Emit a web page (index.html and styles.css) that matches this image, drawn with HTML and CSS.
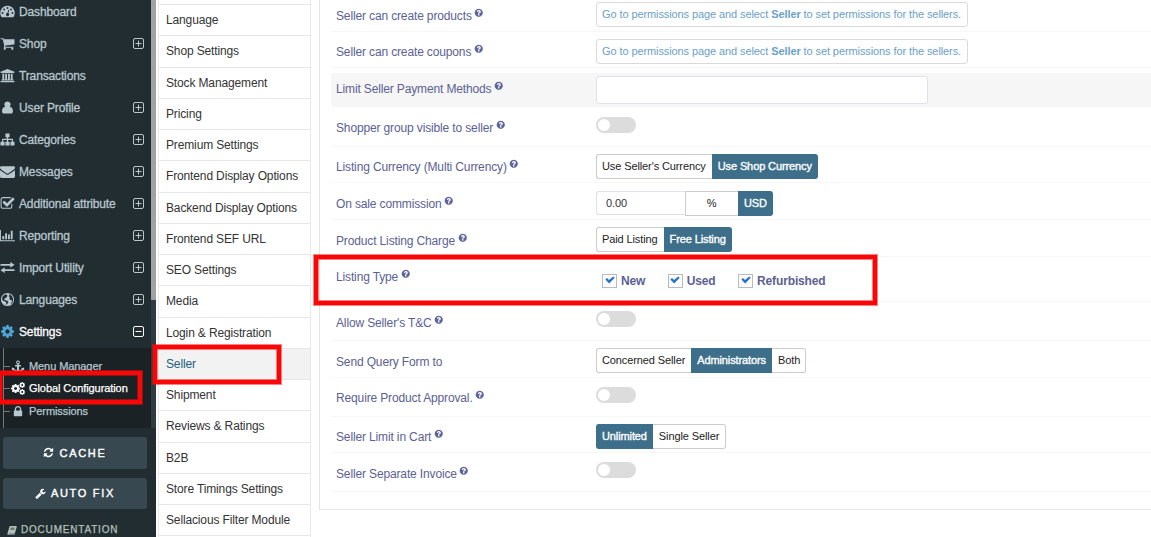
FILE: index.html
```html
<!DOCTYPE html>
<html lang="en">
<head>
<meta charset="utf-8">
<title>Global Configuration</title>
<link rel="stylesheet" href="styles.css">
</head>
<body>
<svg class="sprite" aria-hidden="true">
  <symbol id="dashboard" viewBox="0 0 16 14"><path fill-rule="evenodd" d="M8 1a7.7 7.7 0 0 0-6.6 11.7q.3.5.8.5h11.6q.5 0 .8-.5A7.700 7.700 0 0 0 8 1zM8 2.200a1 1 0 1 1 0 2 1 1 0 0 1 0-2zM4.300 3.800a1 1 0 1 1 0 2 1 1 0 0 1 0-2zM11.700 3.800a1 1 0 1 1 0 2 1 1 0 0 1 0-2zM2.700 7.600a1 1 0 1 1 0 2 1 1 0 0 1 0-2zM13.300 7.600a1 1 0 1 1 0 2 1 1 0 0 1 0-2zM8.900 5.100l.9.250-.9 3.500a1.600 1.600 0 1 1-.9-.2z"/></symbol>
  <symbol id="cart" viewBox="0 0 1792 1792"><path d="M704 1536q0 52-38 90t-90 38-90-38-38-90 38-90 90-38 90 38 38 90zm896 0q0 52-38 90t-90 38-90-38-38-90 38-90 90-38 90 38 38 90zm128-1088v512q0 24-16.500 42.500t-40.500 21.500l-1044 122q13 60 13 70 0 16-24 64h920q26 0 45 19t19 45-19 45-45 19h-1024q-26 0-45-19t-19-45q0-11 8-31.500t16-36 21.500-40 15.500-29.500l-177-823h-204q-26 0-45-19t-19-45 19-45 45-19h256q16 0 28.500 6.500t19.500 15.500 13 24.500 8 26 5.500 29.500 4.500 26h1201q26 0 45 19t19 45z"/></symbol>
  <symbol id="bank" viewBox="0 0 16 16"><path d="M8 1l7.500 3v1h-1v.6h-13V5h-1V4zM2.500 6.300h2v6h1v-6h2v6h1v-6h2v6h1v-6h2v6h.9v.8H1.600v-.8h.9zM1 13.600h14v.7h.7v1H.3v-1H1z"/></symbol>
  <symbol id="user" viewBox="0 0 16 16"><path d="M8 1.500a3.400 3.400 0 0 1 2.400 5.800c2.500.2 3.400 2.400 3.400 4.700 0 1.600-.9 2.500-2.300 2.500h-7C3.100 14.500 2.200 13.600 2.200 12c0-2.300.9-4.500 3.400-4.700A3.400 3.400 0 0 1 8 1.500z"/></symbol>
  <symbol id="sitemap" viewBox="0 0 16 16"><path d="M5.800 1.500h4.400v4H8.700v1.700h5.100v3.300h1.700v4h-4.400v-4h1.500V8.400H8.700v2.100h1.500v4H5.800v-4h1.500V8.400H3.400v2.100h1.500v4H.5v-4h1.700V7.200h5.100V5.500H5.800z"/></symbol>
  <symbol id="mail" viewBox="0 0 1792 1792"><path d="M1792 710v794q0 66-47 113t-113 47h-1472q-66 0-113-47t-47-113v-794q44 49 101 87 362 246 497 345 57 42 92.500 65.500t94.500 48 110 24.500h2q51 0 110-24.500t94.500-48 92.500-65.500q170-123 498-345 57-39 100-87zm0-294q0 79-49 151t-122 123q-376 261-468 325-10 7-42.500 31t-54 38.500-52 32.500-57.500 27-50 9h-2q-23 0-50-9t-57.500-27-52-32.500-54-38.500-42.500-31q-91-64-262-182.500t-205-142.500q-62-42-117-115.500t-55-136.500q0-78 41.500-130t118.500-52h1472q65 0 112.500 47t47.500 113z"/></symbol>
  <symbol id="check" viewBox="0 0 1792 1792"><path d="M1472 930v318q0 119-84.500 203.500t-203.500 84.500h-832q-119 0-203.500-84.500t-84.500-203.500v-832q0-119 84.500-203.500t203.500-84.500h832q63 0 117 25 15 7 18 23 3 17-9 29l-49 49q-10 10-23 10-3 0-9-2-23-6-45-6h-832q-66 0-113 47t-47 113v832q0 66 47 113t113 47h832q66 0 113-47t47-113v-254q0-13 9-22l64-64q10-10 23-10 6 0 12 3 20 8 20 29zm231-489l-814 814q-24 24-57 24t-57-24l-430-430q-24-24-24-57t24-57l110-110q24-24 57-24t57 24l263 263 647-647q24-24 57-24t57 24l110 110q24 24 24 57t-24 57z"/></symbol>
  <symbol id="chart" viewBox="0 0 16 16"><path d="M0 2h1v11h15v1H0zM2.500 8.500h2V12h-2zM5.500 5.500h2V12h-2zM8.500 7h2v5h-2zM11.500 3h2v9h-2z"/></symbol>
  <symbol id="exchange" viewBox="0 0 16 16"><path d="M.5 4.200H11V2l4.500 3.100L11 8.200V6H.5zM15.500 9.900H5V7.700L.5 10.800 5 13.900v-2.200h10.500z"/></symbol>
  <symbol id="globe" viewBox="0 0 16 16"><path fill-rule="evenodd" d="M8 1a7 7 0 1 1 0 14A7 7 0 0 1 8 1zM9 2.200l1.300 1-1.100 1.500 1.500.5-.8 1.700.8 1.400 2 .6.1 1.600-1.700 2.900c2-1.200 2.900-3 2.800-5.400C13.800 4.800 11.800 2.500 9 2.200zM2.500 5.500L2.200 8l1.600 1.600 1.600.5 1.600 1.200-1.100 2.200.7.200 2-2.100.2-1.400-2.300-1.300-1.400-.2-.6-1.200 1.200-1.100 1.500-.7.7-1.700-1.200-1.500c-1.700.4-3.200 1.400-4.200 3z"/></symbol>
  <symbol id="cog" viewBox="0 0 1792 1792"><path d="M1152 896q0-106-75-181t-181-75-181 75-75 181 75 181 181 75 181-75 75-181zm512-109v222q0 12-8 23t-20 13l-185 28q-19 54-39 91 35 50 107 138 10 12 10 25t-9 23q-27 37-99 108t-94 71q-12 0-26-9l-138-108q-44 23-91 38-16 136-29 186-7 28-36 28h-222q-14 0-24.500-8.500t-11.500-21.500l-28-184q-49-16-90-37l-141 107q-10 9-25 9-14 0-25-11-126-114-165-168-7-10-7-23 0-12 8-23 15-21 51-66.500t54-70.500q-27-50-41-99l-183-27q-13-2-21-12.500t-8-23.500v-222q0-12 8-23t19-13l186-28q14-46 39-92-40-57-107-138-10-12-10-24 0-10 9-23 26-36 98.500-107.500t94.500-71.500q13 0 26 10l138 107q44-23 91-38 16-136 29-186 7-28 36-28h222q14 0 24.500 8.500t11.500 21.500l28 184q49 16 90 37l142-107q9-9 24-9 13 0 25 10 129 119 165 170 7 8 7 22 0 12-8 23-15 21-51 66.500t-54 70.500q26 50 41 98l183 28q13 2 21 12.500t8 23.500z"/></symbol>
  <symbol id="cogs" viewBox="0 0 14 13"><use href="#cog" x="-.7" y="1.200" width="10.600" height="10.600"/><use href="#cog" x="7.800" y="-.4" width="6.800" height="6.800"/><use href="#cog" x="7.800" y="6.600" width="6.800" height="6.800"/></symbol>
  <symbol id="anchor" viewBox="0 0 14 14"><path fill-rule="evenodd" d="M7 .5a2 2 0 0 1 .9 3.800v1.200h2.300v1.600H8.100V11c1.600-.1 2.600-.6 3.200-1.300l-.9-.9L13.600 8v3.300l-1-.8C11.500 12 9.700 13.200 7 13.400 4.300 13.200 2.500 12 1.400 10.500l-1 .8V8l3.200.8-.9.900c.6.700 1.600 1.200 3.200 1.300V7.100H3.800V5.500h2.300V4.300A2 2 0 0 1 7 .5zM7 1.600a.9.900 0 1 0 0 1.800.9.900 0 0 0 0-1.800z"/></symbol>
  <symbol id="lock" viewBox="0 0 1792 1792"><path d="M640 768h512v-192q0-106-75-181t-181-75-181 75-75 181v192zm832 96v576q0 40-28 68t-68 28h-960q-40 0-68-28t-28-68v-576q0-40 28-68t68-28h32v-192q0-184 132-316t316-132 316 132 132 316v192h32q40 0 68 28t28 68z"/></symbol>
  <symbol id="refresh" viewBox="0 0 1792 1792"><path d="M1639 1056q0 5-1 7-64 268-268 434.500t-478 166.500q-146 0-282.500-55t-243.500-157l-129 129q-19 19-45 19t-45-19-19-45v-448q0-26 19-45t45-19h448q26 0 45 19t19 45-19 45l-137 137q71 66 161 102t187 36q134 0 250-65t186-179q11-17 53-117 8-23 30-23h192q13 0 22.500 9.500t9.500 22.500zm25-800v448q0 26-19 45t-45 19h-448q-26 0-45-19t-19-45 19-45l138-138q-148-137-349-137-134 0-250 65t-186 179q-11 17-53 117-8 23-30 23h-199q-13 0-22.500-9.500t-9.500-22.500v-7q65-268 270-434.500t480-166.500q146 0 284 55.500t245 156.500l130-129q19-19 45-19t45 19 19 45z"/></symbol>
  <symbol id="wrench" viewBox="0 0 1792 1792"><path d="M448 1472q0-26-19-45t-45-19-45 19-19 45 19 45 45 19 45-19 19-45zm644-420l-682 682q-37 37-90 37-52 0-91-37l-106-108q-38-36-38-90 0-53 38-91l681-681q39 98 114.500 173.500t173.500 114.500zm634-435q0 39-23 106-47 134-164.500 217.500t-258.500 83.500q-185 0-316.500-131.500t-131.500-316.500 131.500-316.500 316.500-131.500q58 0 121.500 16.500t107.500 46.500q16 11 16 28t-16 28l-293 169v224l193 107q5-3 79-48.500t135.500-81 70.500-35.500q15 0 23.500 10t8.500 25z"/></symbol>
  <symbol id="book" viewBox="0 0 14 14"><path fill-rule="evenodd" d="M4.600 1.500h8.200q1 .2.800 1.200l-2.400 8.600q-.3.900-1.200.9H2.500q-.7 0-.7.500t.8.500h7.800l.5-.4v.7q-.3.500-1 .5H2Q.4 13.500.6 11.800L3.200 3q.4-1.400 1.400-1.500zM5.200 4l-.3.900h5.700l.3-.9zM4.600 6.200l-.3.900H10l.3-.9z"/></symbol>
  <symbol id="help" viewBox="0 0 1792 1792"><path d="M1024 1376v-192q0-14-9-23t-23-9h-192q-14 0-23 9t-9 23v192q0 14 9 23t23 9h192q14 0 23-9t9-23zm256-672q0-88-55.500-163t-138.500-116-170-41q-243 0-371 213-15 24 8 42l132 100q7 6 19 6 16 0 25-12 53-68 86-92 34-24 86-24 48 0 85.500 26t37.500 59q0 38-20 61t-68 45q-63 28-115.500 86.500t-52.500 125.500v36q0 14 9 23t23 9h192q14 0 23-9t9-23q0-19 21.500-49.500t54.500-49.500q32-18 49-28.500t46-35 44.500-48 28-60.500 12.500-81zm384 192q0 209-103 385.500t-279.500 279.500-385.500 103-385.500-103-279.500-279.500-103-385.500 103-385.500 279.500-279.500 385.500-103 385.500 103 279.500 279.500 103 385.500z"/></symbol>
  <symbol id="plus" viewBox="0 0 11 11"><path fill="none" stroke="currentColor" d="M2 .5h7A1.500 1.500 0 0 1 10.500 2v7A1.500 1.500 0 0 1 9 10.500H2A1.500 1.500 0 0 1 .5 9V2A1.500 1.500 0 0 1 2 .5zM2.500 5.500h6M5.500 2.500v6"/></symbol>
  <symbol id="minus" viewBox="0 0 11 11"><path fill="none" stroke="currentColor" d="M2 .5h7A1.500 1.500 0 0 1 10.500 2v7A1.500 1.500 0 0 1 9 10.500H2A1.500 1.500 0 0 1 .5 9V2A1.500 1.500 0 0 1 2 .5zM2.500 5.500h6"/></symbol>
  <symbol id="tick" viewBox="0 0 10 8"><path d="M.3 3.600L2 2l2 1.900L8.200.4l1.500 1.400L4.200 7.600z"/></symbol>
</svg>

<div class="app">
  <aside class="sidebar">
    <div class="side-main">
      <nav class="menu">
        <a class="item"><svg class="icon"><use href="#dashboard"/></svg><span>Dashboard</span></a>
        <a class="item"><svg class="icon"><use href="#cart"/></svg><span>Shop</span><svg class="toggle-icon"><use href="#plus"/></svg></a>
        <a class="item"><svg class="icon"><use href="#bank"/></svg><span>Transactions</span></a>
        <a class="item"><svg class="icon"><use href="#user"/></svg><span>User Profile</span><svg class="toggle-icon"><use href="#plus"/></svg></a>
        <a class="item"><svg class="icon"><use href="#sitemap"/></svg><span>Categories</span><svg class="toggle-icon"><use href="#plus"/></svg></a>
        <a class="item"><svg class="icon"><use href="#mail"/></svg><span>Messages</span><svg class="toggle-icon"><use href="#plus"/></svg></a>
        <a class="item"><svg class="icon"><use href="#check"/></svg><span>Additional attribute</span><svg class="toggle-icon"><use href="#plus"/></svg></a>
        <a class="item"><svg class="icon"><use href="#chart"/></svg><span>Reporting</span><svg class="toggle-icon"><use href="#plus"/></svg></a>
        <a class="item"><svg class="icon"><use href="#exchange"/></svg><span>Import Utility</span><svg class="toggle-icon"><use href="#plus"/></svg></a>
        <a class="item"><svg class="icon"><use href="#globe"/></svg><span>Languages</span><svg class="toggle-icon"><use href="#plus"/></svg></a>
        <a class="item active"><svg class="icon"><use href="#cog"/></svg><span>Settings</span><svg class="toggle-icon"><use href="#minus"/></svg></a>
      </nav>
      <div class="submenu">
        <a class="sub"><svg class="sub-icon"><use href="#anchor"/></svg>Menu Manager</a>
        <a class="sub current"><svg class="sub-icon"><use href="#cogs"/></svg>Global Configuration</a>
        <a class="sub"><svg class="sub-icon"><use href="#lock"/></svg>Permissions</a>
      </div>
      <div class="actions">
        <button class="action"><svg class="action-icon"><use href="#refresh"/></svg>CACHE</button>
        <button class="action"><svg class="action-icon"><use href="#wrench"/></svg>AUTO FIX</button>
      </div>
      <a class="docs"><svg class="docs-icon"><use href="#book"/></svg>DOCUMENTATION</a>
    </div>
    <div class="scroll"><div class="thumb"></div></div>
    <div class="mark mark-config"></div>
  </aside>

  <ul class="tabs">
    <li class="tab">Language</li>
    <li class="tab">Shop Settings</li>
    <li class="tab">Stock Management</li>
    <li class="tab">Pricing</li>
    <li class="tab">Premium Settings</li>
    <li class="tab">Frontend Display Options</li>
    <li class="tab">Backend Display Options</li>
    <li class="tab">Frontend SEF URL</li>
    <li class="tab">SEO Settings</li>
    <li class="tab">Media</li>
    <li class="tab">Login &amp; Registration</li>
    <li class="tab selected">Seller</li>
    <li class="tab">Shipment</li>
    <li class="tab">Reviews &amp; Ratings</li>
    <li class="tab">B2B</li>
    <li class="tab">Store Timings Settings</li>
    <li class="tab">Sellacious Filter Module</li>
  </ul>

  <main class="panel">
    <div class="row first"><label class="label">Seller can create products<svg class="help"><use href="#help"/></svg></label><div class="note">Go to permissions page and select <b>Seller</b> to set permissions for the sellers.</div></div>
    <div class="row"><label class="label">Seller can create coupons<svg class="help"><use href="#help"/></svg></label><div class="note">Go to permissions page and select <b>Seller</b> to set permissions for the sellers.</div></div>
    <div class="row band"><label class="label">Limit Seller Payment Methods<svg class="help"><use href="#help"/></svg></label><div class="field"></div></div>
    <div class="row tall h40"><label class="label">Shopper group visible to seller<svg class="help"><use href="#help"/></svg></label><div class="switch"></div></div>
    <div class="row"><label class="label">Listing Currency (Multi Currency)<svg class="help"><use href="#help"/></svg></label><div class="group"><span class="opt">Use Seller's Currency</span><span class="opt on">Use Shop Currency</span></div></div>
    <div class="row h37 money"><label class="label">On sale commission<svg class="help"><use href="#help"/></svg></label><div class="amount">0.00</div><div class="group units"><span class="opt percent">%</span><span class="opt on">USD</span></div></div>
    <div class="row h37"><label class="label">Product Listing Charge<svg class="help"><use href="#help"/></svg></label><div class="group"><span class="opt">Paid Listing</span><span class="opt on">Free Listing</span></div></div>
    <div class="row types"><label class="label">Listing Type<svg class="help"><use href="#help"/></svg></label>
      <div class="checks">
        <span class="choice"><span class="box"><svg class="tick"><use href="#tick"/></svg></span>New</span>
        <span class="choice"><span class="box"><svg class="tick"><use href="#tick"/></svg></span>Used</span>
        <span class="choice"><span class="box"><svg class="tick"><use href="#tick"/></svg></span>Refurbished</span>
      </div>
    </div>
    <div class="row tall"><label class="label">Allow Seller's T&amp;C<svg class="help"><use href="#help"/></svg></label><div class="switch"></div></div>
    <div class="row h37"><label class="label">Send Query Form to</label><div class="group"><span class="opt">Concerned Seller</span><span class="opt on">Administrators</span><span class="opt">Both</span></div></div>
    <div class="row tall approval"><label class="label">Require Product Approval.<svg class="help"><use href="#help"/></svg></label><div class="switch"></div></div>
    <div class="row limit"><label class="label">Seller Limit in Cart<svg class="help"><use href="#help"/></svg></label><div class="group"><span class="opt on">Unlimited</span><span class="opt">Single Seller</span></div></div>
    <div class="row tall"><label class="label">Seller Separate Invoice<svg class="help"><use href="#help"/></svg></label><div class="switch"></div></div>
  </main>
</div>
<div class="mark mark-seller"></div>
<div class="mark mark-types"></div>
</body>
</html>
```
FILE: styles.css
```css
* { box-sizing: border-box; }
body {
  margin: 0;
  width: 1151px;
  height: 537px;
  overflow: hidden;
  position: relative;
  background: #fff;
  font-family: "Liberation Sans", Arial, sans-serif;
  font-size: 12px;
  letter-spacing: -0.14px;
}
.sprite { position: absolute; width: 0; height: 0; }
.app { display: flex; height: 537px; overflow: hidden; }

/* Sidebar */
.sidebar {
  position: relative;
  display: flex;
  width: 156px;
  height: 537px;
  flex: none;
  background: #222d32;
  color: #b8c7ce;
}
.side-main { width: 151px; flex: none; }
.menu { height: 352px; margin-top: -4px; }
.item {
  display: flex;
  align-items: center;
  height: 32px;
  padding-right: 7px;
  -webkit-text-stroke: 0.3px currentColor;
}
.icon { width: 15px; height: 15px; margin-right: 4px; margin-top: -1px; fill: currentColor; flex: none; }
.toggle-icon { width: 11px; height: 11px; margin-left: auto; margin-top: -1px; }
.item.active { color: #fff; }
.item.active .icon { color: #4fa5d5; }
.submenu {
  display: flex;
  flex-direction: column;
  height: 80px;
  padding-top: 7px;
  background: linear-gradient(90deg, transparent 3px, #75797b 3px, #75797b 4px, transparent 4px) #1a2226;
}
.sub {
  display: flex;
  align-items: center;
  height: 22.5px;
  font-size: 11px;
  letter-spacing: -0.08px;
  -webkit-text-stroke: 0.25px currentColor;
}
.sub::before { content: ""; width: 6px; height: 1px; margin-left: 4px; background: #75797b; }
.sub.current { color: #fff; padding-bottom: 1px; }
.sub-icon { width: 14px; height: 13px; margin: 0 4px 0 1px; fill: currentColor; flex: none; }
.actions { display: flex; flex-direction: column; gap: 9px; padding: 9px 4px 0 3px; }
.action {
  display: flex;
  align-items: center;
  justify-content: center;
  height: 31.5px;
  border: 0;
  border-radius: 3px;
  background: #374850;
  color: #fff;
  font: 11px "Liberation Sans", Arial, sans-serif;
  letter-spacing: 1.7px;
  -webkit-text-stroke: 0.4px currentColor;
}
.action-icon { width: 11px; height: 11px; margin-right: 5px; fill: currentColor; }
.docs {
  display: flex;
  align-items: center;
  padding: 15px 0 0 7px;
  font-size: 10px;
  letter-spacing: 0.8px;
  color: #b3c1b9;
  -webkit-text-stroke: 0.25px currentColor;
}
.docs-icon { width: 10px; height: 10px; margin-right: 4px; fill: currentColor; }
.scroll { width: 5px; height: 428px; background: #2e3b41; }
.thumb { height: 300px; background: #a0a2a4; }

/* Tabs */
.tabs {
  width: 153px;
  margin: 0 0 0 2px;
  padding: 4px 0 0;
  list-style: none;
  flex: none;
  border: solid #e9e9ec;
  border-width: 0 1px;
}
.tab {
  height: 31.25px;
  padding-left: 7px;
  border-top: 1px solid #e7e7e7;
  line-height: 30.5px;
  color: #333;
  white-space: nowrap;
}
.tab:last-child { border-bottom: 1px solid #e7e7e7; height: 32px; }
.tab.selected { background: #f2f2f2; color: #205f7c; }

/* Settings panel */
.panel {
  width: 832px;
  height: 510px;
  margin-left: 8px;
  padding-left: 11px;
  flex: none;
  border: solid #e4e4e6;
  border-width: 0 0 1px 1px;
}
.row {
  display: flex;
  align-items: flex-start;
  height: 36px;
  padding: 7px 0 0 5px;
  border-bottom: 1px solid #f7f7f7;
}
.label {
  display: flex;
  width: 260px;
  flex: none;
  padding-top: 6px;
  line-height: 14px;
  color: #5b6194;
  white-space: nowrap;
}
.help { width: 9.5px; height: 9.5px; margin: -1.5px 0 0 2.5px; fill: #5f649b; }
.first { height: 32px; padding-top: 2px; }
.first .label { padding-top: 7px; }
.band {
  height: 34px;
  margin-top: 5px;
  padding-top: 3px;
  border: 0;
  border-radius: 3px 0 0 3px;
  background: #f6f6f6;
}
.h37 { height: 37px; }
.h37 .label { padding-top: 7px; }
.money { padding-top: 8px; }
.money .label { padding-top: 6px; }
.tall { height: 39px; padding-top: 9px; }
.tall .label { padding-top: 5px; }
.h40 { height: 40px; padding-top: 10px; }
.h40 .label { padding-top: 4px; }
.approval .label { padding-top: 4px; }
.types { height: 45px; }
.note, .opt, .amount { font-size: 11px; letter-spacing: -0.11px; line-height: 22px; white-space: nowrap; }
.note {
  height: 25px;
  width: 372px;
  padding: 0 0 0 5px;
  border: 1px solid #dadada;
  border-radius: 3px;
  color: #6ba0cb;
  letter-spacing: -0.095px;
}
.field { width: 332px; height: 28px; border: 1px solid #e0e0e8; border-radius: 3px; background: #fff; }
.switch {
  width: 40px;
  height: 16px;
  padding: 2px;
  border-radius: 8px;
  background: #dcdcdc;
}
.switch::before { content: ""; display: block; width: 12px; height: 12px; border-radius: 50%; background: #fff; }
.group { display: flex; }
.opt {
  height: 25px;
  padding: 0 6px 0 5px;
  border: 1px solid #ccc;
  color: #222;
}
.opt + .opt { border-left: 0; padding: 0 5px 0 6px; }
.opt:first-child { border-radius: 3px 0 0 3px; border-right: 0; }
.opt:last-child { border-radius: 0 3px 3px 0; }
.opt.on {
  border-color: #3e6f8a;
  background: #3e6f8a;
  color: #fff;
  -webkit-text-stroke: 0.35px currentColor;
}
.limit .opt + .opt { padding-right: 6px; }
.amount {
  width: 89px;
  height: 24px;
  padding-left: 9px;
  border: 1px solid #e0e0e8;
  border-right: 0;
  border-radius: 3px 0 0 3px;
  color: #333;
}
.percent { width: 53px; text-align: center; }
.units .percent { border-radius: 0; }
.checks { display: flex; padding: 10px 0 0 6px; gap: 22.5px; }
.choice {
  display: flex;
  align-items: center;
  height: 14px;
  line-height: 14px;
  padding-bottom: 1px;
  font-weight: bold;
  color: #5b6194;
}
.box {
  width: 15px;
  height: 14px;
  margin: 1px 4px 0 0;
  border: 1px solid #bbb;
  background: #fff;
  display: flex;
  justify-content: center;
  padding-top: 1px;
}
.tick { width: 10px; height: 8px; fill: #2273ce; }

/* Highlight frames */
.mark {
  position: absolute;
  border: 4px solid #f90707;
  box-shadow: 0 0 0 1px rgba(249, 7, 7, 0.5), inset 0 0 0 1px rgba(249, 7, 7, 0.5);
  z-index: 2;
}
.mark-config { left: -2px; top: 371px; width: 144px; height: 33px; }
.mark-seller { left: 153px; top: 345px; width: 128px; height: 39px; }
.mark-types { left: 314px; top: 255px; width: 563px; height: 50px; }
```
